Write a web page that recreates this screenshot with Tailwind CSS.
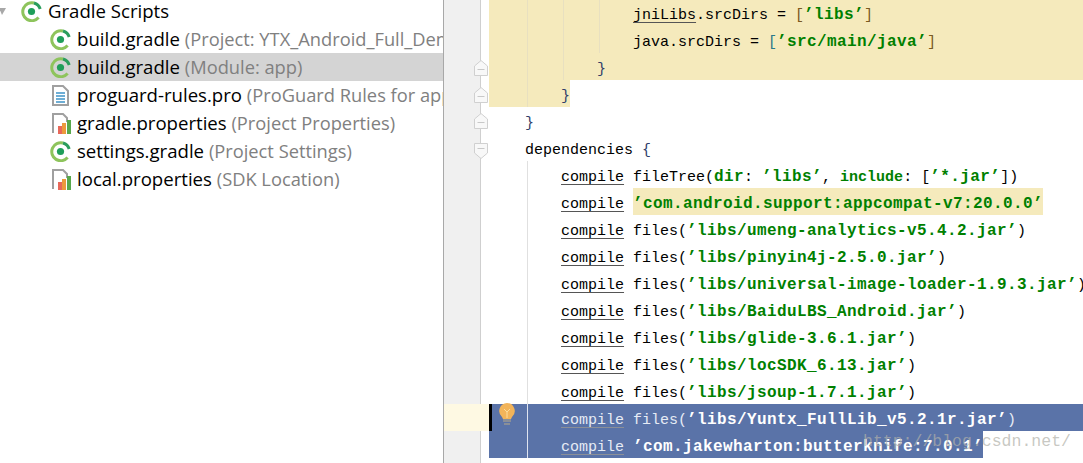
<!DOCTYPE html>
<html lang="en">
<head>
    <meta charset="UTF-8">
    <title>build.gradle</title>
    <script src="https://cdn.jsdelivr.net/npm/@tailwindcss/browser@4"></script>
</head>
<body class="bg-white">
<div class="flex h-[463px] w-[1083px] overflow-hidden relative">

    <!-- project tree -->
    <div class="w-[443px] shrink-0 overflow-hidden -mt-[3px] text-[18.6px] whitespace-nowrap [font-family:'Open_Sans',sans-serif] text-black">
        <div class="h-[28px] flex items-center pl-[21px] relative">
            <svg class="absolute left-0 top-[11px] shrink-0" width="7" height="8" viewBox="0 0 7 8"><path d="M-1 0H6L2 7Z" fill="#a8a8a8"/></svg>
            <svg class="mr-[6px] shrink-0" width="21" height="21" viewBox="0 0 21 21"><path d="M17.6 16.6A9 9 0 1 1 13 2" fill="none" stroke="#8ec45c" stroke-width="3"/><path d="M13 2A9 9 0 0 1 19.2 8" fill="none" stroke="#2a9d5c" stroke-width="3"/><circle cx="10.5" cy="10.5" r="3.6" fill="#1f9e5a"/></svg>
            <span>Gradle Scripts</span>
        </div>
        <div class="h-[28px] flex items-center pl-[50px]">
            <svg class="mr-[6px] shrink-0" width="21" height="21" viewBox="0 0 21 21"><path d="M17.6 16.6A9 9 0 1 1 13 2" fill="none" stroke="#8ec45c" stroke-width="3"/><path d="M13 2A9 9 0 0 1 19.2 8" fill="none" stroke="#2a9d5c" stroke-width="3"/><circle cx="10.5" cy="10.5" r="3.6" fill="#1f9e5a"/></svg>
            <span>build.gradle <span class="text-[18.3px] text-[#808080]">(Project: YTX_Android_Full_Demo)</span></span>
        </div>
        <div class="h-[28px] flex items-center pl-[50px] bg-[#d4d4d4]">
            <svg class="mr-[6px] shrink-0" width="21" height="21" viewBox="0 0 21 21"><path d="M17.6 16.6A9 9 0 1 1 13 2" fill="none" stroke="#8ec45c" stroke-width="3"/><path d="M13 2A9 9 0 0 1 19.2 8" fill="none" stroke="#2a9d5c" stroke-width="3"/><circle cx="10.5" cy="10.5" r="3.6" fill="#1f9e5a"/></svg>
            <span>build.gradle <span class="text-[18.3px] text-[#808080]">(Module: app)</span></span>
        </div>
        <div class="h-[28px] flex items-center pl-[52px]">
            <svg class="mr-[8px] shrink-0" width="17" height="21" viewBox="0 0 17 21"><path d="M1 1H11L16 6V20H1Z" fill="#fff" stroke="#a0a0a0" stroke-width="2"/><path d="M4 8H13M4 11H13M4 14H13M4 17H13" stroke="#3f94c8" stroke-width="1.4"/></svg>
            <span>proguard-rules.pro <span class="text-[18.3px] text-[#808080]">(ProGuard Rules for app)</span></span>
        </div>
        <div class="h-[28px] flex items-center pl-[52px]">
            <svg class="mr-[5px] shrink-0" width="20" height="21" viewBox="0 0 20 21"><path d="M1 20V1H11L15 5V9" fill="#fff" stroke="#a0a0a0" stroke-width="2"/><rect x="6" y="13" width="4" height="8" fill="#e8685a"/><rect x="10" y="10" width="4" height="11" fill="#ec9a3c"/><rect x="15" y="7" width="4" height="14" fill="#58a84c"/></svg>
            <span>gradle.properties <span class="text-[18.3px] text-[#808080]">(Project Properties)</span></span>
        </div>
        <div class="h-[28px] flex items-center pl-[50px]">
            <svg class="mr-[6px] shrink-0" width="21" height="21" viewBox="0 0 21 21"><path d="M17.6 16.6A9 9 0 1 1 13 2" fill="none" stroke="#8ec45c" stroke-width="3"/><path d="M13 2A9 9 0 0 1 19.2 8" fill="none" stroke="#2a9d5c" stroke-width="3"/><circle cx="10.5" cy="10.5" r="3.6" fill="#1f9e5a"/></svg>
            <span>settings.gradle <span class="text-[18.3px] text-[#808080]">(Project Settings)</span></span>
        </div>
        <div class="h-[28px] flex items-center pl-[52px]">
            <svg class="mr-[5px] shrink-0" width="20" height="21" viewBox="0 0 20 21"><path d="M1 20V1H11L15 5V9" fill="#fff" stroke="#a0a0a0" stroke-width="2"/><rect x="6" y="13" width="4" height="8" fill="#e8685a"/><rect x="10" y="10" width="4" height="11" fill="#ec9a3c"/><rect x="15" y="7" width="4" height="14" fill="#58a84c"/></svg>
            <span>local.properties <span class="text-[18.3px] text-[#808080]">(SDK Location)</span></span>
        </div>
    </div>

    <!-- gutter -->
    <div class="w-[38px] shrink-0 bg-[#f0f0f0] border-l border-r border-l-[#a8a8a8] border-r-[#cfcfcf]"></div>

    <!-- code -->
    <div class="flex-1 min-w-0 pl-[8px] -mt-px text-[15px] leading-[33px] [font-family:'Liberation_Mono',monospace] text-black">
        <div class="h-[27px] whitespace-pre bg-[#f5eabc]">                <span class="underline underline-offset-[3px] decoration-[#555]">jniLibs</span>.srcDirs = <span class="text-[#7a5a20]">[</span><span class="font-bold text-[16px] tracking-[0.4px] text-[#008000]">’libs’</span><span class="text-[#7a5a20]">]</span></div>
        <div class="h-[27px] whitespace-pre bg-[#f5eabc]">                java.srcDirs = <span class="text-[#2a7a8a]">[</span><span class="font-bold text-[16px] tracking-[0.4px] text-[#008000]">’src/main/java’</span><span class="text-[#7a5a20]">]</span></div>
        <div class="h-[27px] whitespace-pre bg-[#f5eabc]">            <span class="text-[#30406a]">}</span></div>
        <div class="h-[27px] whitespace-pre w-[81px] bg-[#f5eabc]">        <span class="text-[#30406a]">}</span></div>
        <div class="h-[27px] whitespace-pre">    <span class="text-[#30406a]">}</span></div>
        <div class="h-[27px] whitespace-pre">    dependencies <span class="text-[#30406a]">{</span></div>
        <div class="h-[27px] whitespace-pre">        <span class="underline underline-offset-[3px] decoration-[#555]">compile</span> fileTree(<span class="font-bold text-[16px] tracking-[0.4px] text-[#008000]">dir</span>: <span class="font-bold text-[16px] tracking-[0.4px] text-[#008000]">’libs’</span>, <span class="font-bold text-[#008000]">include</span>: [<span class="font-bold text-[16px] tracking-[0.4px] text-[#008000]">’*.jar’</span>])</div>
        <div class="h-[27px] whitespace-pre">        <span class="underline underline-offset-[3px] decoration-[#555]">compile</span> <span class="inline-block h-[27px] font-bold text-[16px] tracking-[0.4px] text-[#008000] bg-[#f5eabc]">’com.android.support:appcompat-v7:20.0.0’</span></div>
        <div class="h-[27px] whitespace-pre">        <span class="underline underline-offset-[3px] decoration-[#555]">compile</span> files(<span class="font-bold text-[16px] tracking-[0.4px] text-[#008000]">’libs/umeng-analytics-v5.4.2.jar’</span>)</div>
        <div class="h-[27px] whitespace-pre">        <span class="underline underline-offset-[3px] decoration-[#555]">compile</span> files(<span class="font-bold text-[16px] tracking-[0.4px] text-[#008000]">’libs/pinyin4j-2.5.0.jar’</span>)</div>
        <div class="h-[27px] whitespace-pre">        <span class="underline underline-offset-[3px] decoration-[#555]">compile</span> files(<span class="font-bold text-[16px] tracking-[0.4px] text-[#008000]">’libs/universal-image-loader-1.9.3.jar’</span>)</div>
        <div class="h-[27px] whitespace-pre">        <span class="underline underline-offset-[3px] decoration-[#555]">compile</span> files(<span class="font-bold text-[16px] tracking-[0.4px] text-[#008000]">’libs/BaiduLBS_Android.jar’</span>)</div>
        <div class="h-[27px] whitespace-pre">        <span class="underline underline-offset-[3px] decoration-[#555]">compile</span> files(<span class="font-bold text-[16px] tracking-[0.4px] text-[#008000]">’libs/glide-3.6.1.jar’</span>)</div>
        <div class="h-[27px] whitespace-pre">        <span class="underline underline-offset-[3px] decoration-[#555]">compile</span> files(<span class="font-bold text-[16px] tracking-[0.4px] text-[#008000]">’libs/locSDK_6.13.jar’</span>)</div>
        <div class="h-[27px] whitespace-pre">        <span class="underline underline-offset-[3px] decoration-[#555]">compile</span> files(<span class="font-bold text-[16px] tracking-[0.4px] text-[#008000]">’libs/jsoup-1.7.1.jar’</span>)</div>
        <div class="h-[27px] whitespace-pre bg-[#5a73a8] text-[#e6ebf5]">        <span class="underline underline-offset-[3px] decoration-[#8a8f98]">compile</span> files(<span class="font-bold text-[16px] tracking-[0.4px] text-white">’libs/Yuntx_FullLib_v5.2.1r.jar’</span>)</div>
        <div class="h-[27px] whitespace-pre w-[494px] bg-[#5a73a8] text-[#e6ebf5]">        <span class="underline underline-offset-[3px] decoration-[#8a8f98]">compile</span> <span class="font-bold text-[16px] tracking-[0.4px] text-white">’com.jakewharton:butterknife:7.0.1’</span></div>
    </div>

    <!-- indent guides -->
    <div class="absolute left-[527px] top-0 w-px h-[107px] bg-[#e8e0c0]"></div>
    <div class="absolute left-[563px] top-0 w-px h-[80px] bg-[#e8e0c0]"></div>
    <div class="absolute left-[599px] top-0 w-px h-[53px] bg-[#e8e0c0]"></div>
    <div class="absolute left-[527px] top-[161px] w-px h-[243px] bg-[#e0e0e0]"></div>
    <div class="absolute left-[527px] top-[404px] w-px h-[54px] bg-[#dfe4f0]"></div>

    <!-- current line -->
    <div class="absolute left-[444px] top-[404px] w-[45px] h-[27px] bg-[#fef9e3]"></div>
    <div class="absolute left-[489px] top-[404px] w-[3px] h-[27px] bg-black"></div>

    <!-- fold markers -->
    <svg class="absolute left-[474px] top-[60px]" width="14" height="16" viewBox="0 0 14 16"><path d="M.5 15.5V6L7 .5 13.500 6V15.500Z" fill="#f8f8f8" stroke="#d0d0d0"/><path d="M3.500 9.500H10.500" stroke="#c8c8c8"/></svg>
    <svg class="absolute left-[474px] top-[87px]" width="14" height="16" viewBox="0 0 14 16"><path d="M.5 15.5V6L7 .5 13.500 6V15.500Z" fill="#f8f8f8" stroke="#d0d0d0"/><path d="M3.500 9.500H10.500" stroke="#c8c8c8"/></svg>
    <svg class="absolute left-[474px] top-[113px]" width="14" height="16" viewBox="0 0 14 16"><path d="M.5 15.5V6L7 .5 13.500 6V15.500Z" fill="#f8f8f8" stroke="#d0d0d0"/><path d="M3.500 9.500H10.500" stroke="#c8c8c8"/></svg>
    <svg class="absolute left-[474px] top-[143px]" width="14" height="16" viewBox="0 0 14 16"><path d="M.5 .5V10L7 15.500 13.500 10V.5Z" fill="#f8f8f8" stroke="#d0d0d0"/><path d="M3.500 5.500H10.500" stroke="#c8c8c8"/></svg>

    <!-- bulb -->
    <svg class="absolute left-[499px] top-[403px]" width="16" height="23" viewBox="0 0 16 23"><path d="M8 0A8 8 0 0 1 13 14L12 16H4L3 14A8 8 0 0 1 8 0Z" fill="#f2b45a"/><path d="M5 6L8 9 11 6M8 9V15" fill="none" stroke="#fbdc9c"/><rect x="4" y="16" width="8" height="3" fill="#8a8f98"/><rect x="5" y="20" width="6" height="2" fill="#8a8f98"/></svg>

    <!-- watermark -->
    <div class="absolute left-[863px] top-[431px] text-[16.5px] leading-[22px] whitespace-pre [font-family:'Liberation_Mono',monospace] text-[#b0b0a8]/70">http://blog.csdn.net/</div>
</div>
</body>
</html>
